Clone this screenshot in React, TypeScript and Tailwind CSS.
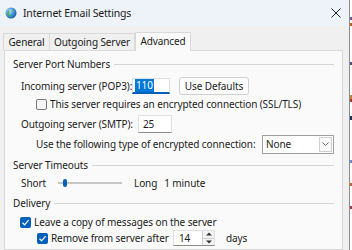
import React from "react";

const font = { fontFamily: '"Noto Sans", "Open Sans", sans-serif' };

function GroupLabel({ text, mt }: { text: string; mt: string }) {
  return (
    <div className={`flex items-center h-[16px] ${mt}`}>
      <span className="whitespace-nowrap">{text}</span>
      <div className="flex-1 h-px bg-[#d5d5d5] ml-[4px]" />
    </div>
  );
}

function CheckBox({ checked }: { checked: boolean }) {
  return checked ? (
    <div className="w-[11px] h-[11px] rounded-[2px] bg-[#005fb8] flex items-center justify-center shrink-0">
      <svg width="9" height="9" viewBox="0 0 9 9">
        <path d="M1.5 4.8 L3.6 6.8 L7.6 2.2" stroke="white" strokeWidth="1.2" fill="none" />
      </svg>
    </div>
  ) : (
    <div className="w-[11px] h-[11px] rounded-[2px] border border-[#7a7a7a] bg-[#f6f6f6] shrink-0" />
  );
}

export default function App() {
  return (
    <div
      className="w-[352px] h-[250px] overflow-hidden flex bg-white text-[10px] tracking-[-0.1px] text-[#1a1a1a] leading-none"
      style={font}
    >
      <div className="w-[349px] h-full flex flex-col bg-[#f0f0f0]">
        {/* Title bar */}
        <div className="h-[26px] bg-[#eef3f9] flex items-center shrink-0">
          <svg width="12" height="12" viewBox="0 0 12 12" className="ml-[5px]">
            <defs>
              <radialGradient id="g" cx="0.35" cy="0.35" r="0.7">
                <stop offset="0" stopColor="#bfe3ff" />
                <stop offset="0.6" stopColor="#3a8fd6" />
                <stop offset="1" stopColor="#1c5ea8" />
              </radialGradient>
            </defs>
            <circle cx="6" cy="6" r="5.5" fill="url(#g)" />
            <path d="M3 3.5 C4.5 3 5 4.5 4.2 5.5 C3.5 6.5 4.5 8 5.5 8.5 L5 10 C3 9.5 1.8 7.5 2.2 5.5 Z" fill="#4caf50" />
            <path d="M7.5 2.5 C8.5 3 9 4 8.5 5 L7.2 4.4 Z" fill="#5cbf60" />
          </svg>
          <span className="ml-[6px] text-[10.5px] tracking-[-0.2px] mt-[1px]">Internet Email Settings</span>
          <div className="flex-1" />
          <svg width="10" height="10" viewBox="0 0 10 10" className="mr-[8px]">
            <path d="M0.5 0.5 L9.5 9.5 M9.5 0.5 L0.5 9.5" stroke="#222" strokeWidth="1" />
          </svg>
        </div>

        {/* Tabs */}
        <div className="flex items-end h-[24px] pl-[3px] shrink-0 relative z-10">
          <div className="h-[17px] w-[47px] border border-[#d9d9d9] border-b-0 bg-[#f0f0f0] flex items-center justify-center">
            General
          </div>
          <div className="h-[17px] w-[85px] border-t border-r border-[#d9d9d9] bg-[#f0f0f0] flex items-center justify-center">
            Outgoing Server
          </div>
          <div className="h-[19px] w-[56px] border border-[#d9d9d9] border-b-0 bg-[#fafafa] flex items-start justify-center pt-[3px] -mb-px">
            Advanced
          </div>
        </div>

        {/* Panel */}
        <div className="ml-[4px] w-[339px] flex-1 border border-[#d9d9d9] bg-[#fafafa] pl-[8px] pr-[8px] pt-[5px] flex flex-col">
          <GroupLabel text="Server Port Numbers" mt="mt-0" />

          <div className="flex items-center h-[20px] mt-[4px] pl-[8px]">
            <span className="w-[111px] whitespace-nowrap">Incoming server (POP3):</span>
            <div className="w-[38px] h-[16px] border border-[#e0e0e0] border-b-2 border-b-[#005fb8] bg-white flex items-center pl-[2px]">
              <span className="bg-[#0078d7] text-white px-[1px] leading-[13px]">110</span>
            </div>
            <div className="ml-[9px] w-[70px] h-[18px] border border-[#d0d0d0] rounded-[3px] bg-[#fdfdfd] flex items-center justify-center">
              Use Defaults
            </div>
          </div>

          <div className="flex items-center h-[16px] pl-[23px]">
            <CheckBox checked={false} />
            <span className="ml-[3px] whitespace-nowrap">This server requires an encrypted connection (SSL/TLS)</span>
          </div>

          <div className="flex items-center h-[20px] mt-[2px] pl-[8px]">
            <span className="w-[117px] whitespace-nowrap">Outgoing server (SMTP):</span>
            <div className="w-[34px] h-[18px] border border-[#e0e0e0] border-b-[#8a8a8a] bg-white flex items-center pl-[4px]">
              25
            </div>
          </div>

          <div className="flex items-center h-[20px] pl-[23px]">
            <span className="w-[226px] whitespace-nowrap">Use the following type of encrypted connection:</span>
            <div className="w-[72px] h-[19px] border border-[#a0a0a0] bg-white flex items-center pl-[3px] pr-[1px]">
              <span className="flex-1">None</span>
              <div className="w-[13px] h-[15px] border border-[#d0d0d0] bg-[#fafafa] flex items-center justify-center">
                <svg width="7" height="4" viewBox="0 0 7 4">
                  <path d="M0.5 0.5 L3.5 3.5 L6.5 0.5" stroke="#555" strokeWidth="0.9" fill="none" />
                </svg>
              </div>
            </div>
          </div>

          <GroupLabel text="Server Timeouts" mt="mt-[3px]" />

          <div className="flex items-center h-[16px] mt-[2px] pl-[8px]">
            <span className="w-[37px]">Short</span>
            <div className="relative w-[64px] h-[2px] bg-[#c6c6c6]">
              <div className="absolute left-[5px] top-[-3px] w-[4px] h-[8px] rounded-[2px] bg-[#005fb8]" />
            </div>
            <span className="ml-[12px]">Long</span>
            <span className="ml-[7px]">1 minute</span>
          </div>

          <GroupLabel text="Delivery" mt="mt-[4px]" />

          <div className="flex items-center h-[14px] mt-[4px] pl-[7px]">
            <CheckBox checked={true} />
            <span className="ml-[3px] whitespace-nowrap">Leave a copy of messages on the server</span>
          </div>

          <div className="flex items-center h-[18px] pl-[24px]">
            <CheckBox checked={true} />
            <span className="ml-[3px] w-[122px] whitespace-nowrap">Remove from server after</span>
            <div className="w-[42px] h-[16px] border border-[#e0e0e0] border-b-[#8a8a8a] bg-white flex items-center">
              <span className="flex-1 pl-[5px]">14</span>
              <div className="w-[12px] h-full border-l border-[#d0d0d0] flex flex-col bg-[#f4f4f4]">
                <div className="flex-1 flex items-center justify-center border-b border-[#d0d0d0]">
                  <svg width="6" height="4" viewBox="0 0 6 4"><path d="M0 3.5 L3 0.5 L6 3.5 Z" fill="#333" /></svg>
                </div>
                <div className="flex-1 flex items-center justify-center">
                  <svg width="6" height="4" viewBox="0 0 6 4"><path d="M0 0.5 L3 3.5 L6 0.5 Z" fill="#333" /></svg>
                </div>
              </div>
            </div>
            <span className="ml-[11px]">days</span>
          </div>
        </div>
      </div>
      <div className="w-px h-full bg-[#8c8c8c]" />
      <div className="w-[2px] h-full flex flex-col bg-white">
        <div className="h-[17px]" />
        <div className="h-[3px] bg-[#6a5a9a]" />
        <div className="h-[3px]" />
        <div className="h-[3px] bg-[#c06020]" />
        <div className="h-[36px]" />
        <div className="h-[3px] bg-[#5a4a8a]" />
        <div className="h-[30px]" />
        <div className="h-[4px] bg-[#c08040]" />
        <div className="h-[3px] bg-[#a04020]" />
        <div className="h-[14px]" />
        <div className="h-[4px] bg-[#203060]" />
        <div className="h-[40px]" />
        <div className="h-[3px] bg-[#6a8ad0]" />
        <div className="h-[20px]" />
        <div className="h-[3px] bg-[#c06030]" />
        <div className="h-[20px]" />
        <div className="h-[3px] bg-[#a04040]" />
      </div>
    </div>
  );
}
